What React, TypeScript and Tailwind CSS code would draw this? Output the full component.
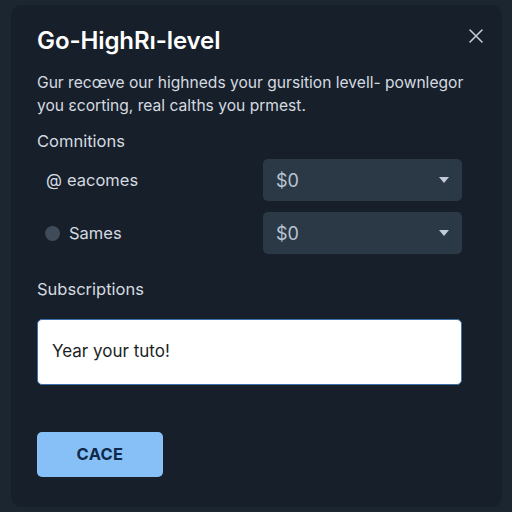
import React from "react";

function Select() {
  return (
    <div className="w-[199px] h-[42px] rounded-[5px] bg-[#2b3947] flex items-center justify-between pl-[13px] pr-[13px]">
      <span className="text-[18px] text-[#b9c5d1]">$0</span>
      <svg width="10" height="6" viewBox="0 0 10 6"><path d="M0 0 L10 0 L5 6 Z" fill="#c3ccd6" /></svg>
    </div>
  );
}

export default function App() {
  return (
    <div className="w-[512px] h-[512px] bg-[#1c2631] pt-[5px] pl-[11px]" style={{ fontFamily: "Inter, 'Noto Sans', sans-serif" }}>
      <div className="relative w-[491px] h-[502px] rounded-[10px] bg-[#17202a] pl-[26px] pt-[22px] flex flex-col">
        <button className="absolute left-[458px] top-[24px] w-[14px] h-[14px]">
          <svg width="14" height="14" viewBox="0 0 14 14"><path d="M1 1 L13 13 M13 1 L1 13" stroke="#c2cad3" strokeWidth="1.6" strokeLinecap="round" /></svg>
        </button>
        <h1 className="text-[24px] leading-[28px] font-semibold text-white tracking-[-0.1px]">Go-HighRı-level</h1>
        <p className="mt-[16px] text-[15.6px] leading-[23px] text-[#d5dae0] whitespace-nowrap">
          Gur recœve our highneds your gursition levell- pownlegor
          <br />
          you ɛcorting, real calths you prmest.
        </p>
        <div className="mt-[13px] text-[16.5px] leading-[22px] text-[#d5dae0]">Comnitions</div>
        <div className="mt-[7px] flex flex-col gap-[11px] w-[425px]">
          <div className="flex items-center justify-between">
            <div className="flex items-center gap-[5px] pl-[9px] text-[16.5px] text-[#d5dae0]">
              <span>@</span>
              <span>eacomes</span>
            </div>
            <Select />
          </div>
          <div className="flex items-center justify-between">
            <div className="flex items-center gap-[9px] pl-[8px] text-[16.5px] text-[#d5dae0]">
              <span className="w-[15px] h-[15px] rounded-full bg-[#3f4b59]" />
              <span>Sames</span>
            </div>
            <Select />
          </div>
        </div>
        <div className="mt-[24px] text-[16.5px] leading-[22px] text-[#d5dae0]">Subscriptions</div>
        <div className="mt-[19px] w-[425px] h-[66px] rounded-[5px] bg-white border border-[#3b6fa8] flex items-center pl-[14px]">
          <span className="text-[17px] text-[#1b1f24]">Year your tuto!</span>
        </div>
        <button className="mt-[47px] w-[126px] h-[45px] rounded-[5px] bg-[#86c0f7] text-[#10294a] font-bold text-[16.5px] tracking-[0.3px]">
          CACE
        </button>
      </div>
    </div>
  );
}
